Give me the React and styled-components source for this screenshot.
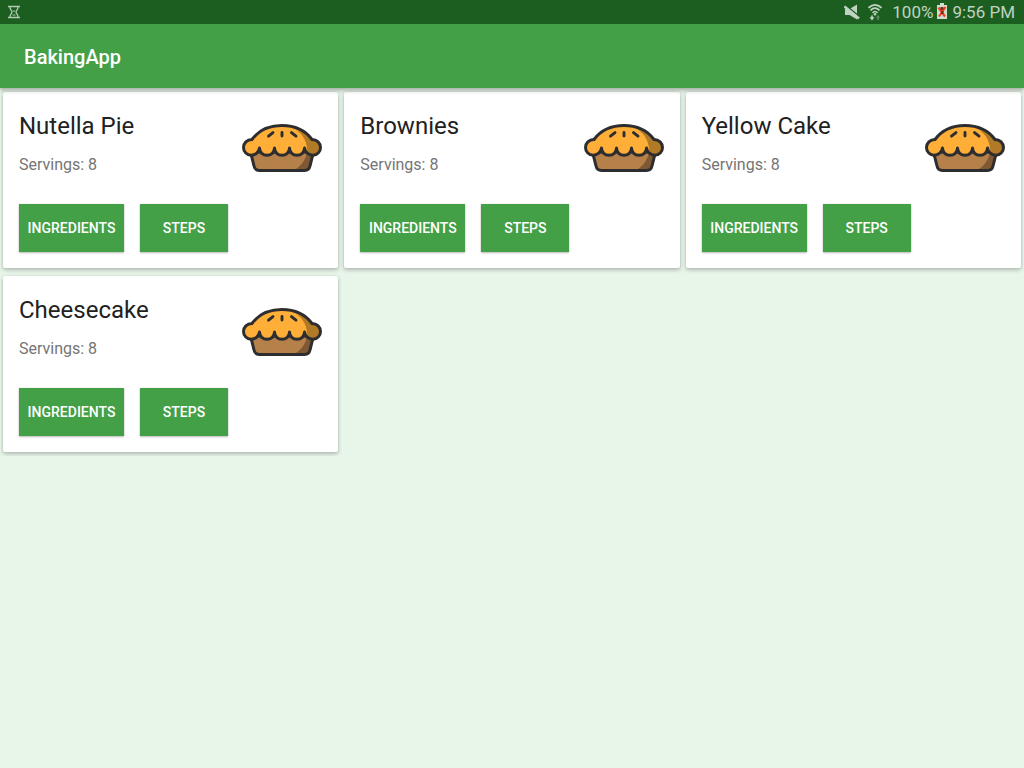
import React from "react";
import styled, { createGlobalStyle } from "styled-components";

const GlobalStyle = createGlobalStyle`
  *, *::before, *::after { box-sizing: border-box; }
  body {
    margin: 0;
    background: #e8f5e9;
    font-family: Roboto, "Noto Sans", sans-serif;
    color: #212121;
  }
`;

const StatusBar = styled.div`
  position: relative;
  z-index: 1;
  display: flex;
  align-items: center;
  justify-content: space-between;
  height: 24px;
  padding: 0 9px 0 8px;
  background: #1b5e20;
  color: #c0d2c1;
`;

const StatusGroup = styled.div`
  display: flex;
  align-items: center;
`;

const StatusText = styled.span`
  font-size: 17px;
  line-height: 24px;
`;

const StatusIcon = styled.svg`
  display: block;
  flex: none;
  margin-left: ${(p) => p.$before || 0}px;
  margin-right: ${(p) => p.$after || 0}px;
`;

const AppBar = styled.header`
  position: relative;
  display: flex;
  align-items: center;
  height: 64px;
  padding: 2px 24px 0;
  background: #43a047;
  box-shadow: 0 3px 4px rgba(0, 0, 0, 0.22), 0 0 4px rgba(0, 0, 0, 0.12);
`;

const AppTitle = styled.h1`
  margin: 0;
  font-size: 20px;
  font-weight: 500;
  line-height: 24px;
  color: #fff;
`;

const RecipeGrid = styled.main`
  display: grid;
  grid-template-columns: repeat(3, 1fr);
  gap: 8px 6px;
  padding: 4px 3px;
`;

const Card = styled.article`
  display: flex;
  flex-direction: column;
  gap: 16px;
  padding: 16px;
  background: #fff;
  border-radius: 2px;
  box-shadow: 0 2px 4px rgba(0, 0, 0, 0.24), 0 0 3px rgba(0, 0, 0, 0.08);
`;

const CardHeader = styled.div`
  display: flex;
  justify-content: space-between;
  height: 80px;
`;

const RecipeName = styled.h2`
  margin: 0 0 12px;
  font-size: 24px;
  font-weight: 400;
  line-height: 36px;
`;

const Servings = styled.p`
  margin: 0;
  font-size: 16px;
  line-height: 18px;
  color: #757575;
`;

const Pie = styled.svg`
  flex: none;
  align-self: center;
`;

const Actions = styled.div`
  display: grid;
  grid-template-columns: 105px 88px;
  gap: 16px;
`;

const ActionButton = styled.button`
  height: 48px;
  padding: 0;
  border: 0;
  background: #43a047;
  color: #fff;
  font-family: inherit;
  font-size: 14px;
  font-weight: 500;
  text-transform: uppercase;
  box-shadow: 0 1px 2px rgba(0, 0, 0, 0.26), 0 0 1px rgba(0, 0, 0, 0.12);
  cursor: pointer;
`;

const CRUST =
  "M10 15.5C17 6 28 1.5 40 1.5S63 6 70 15.5C75 15.5 78.5 19 78.5 23.5C78.5 28 75 31.2 71 31.2C66.5 31.2 63 28 62.5 24C62.5 28.5 59 31.2 55 31.2S47.5 28.5 47.5 24C47.5 28.5 44 31.2 40 31.2S32.5 28.5 32.5 24C32.5 28.5 29 31.2 25 31.2S17.5 28.5 17.5 24C17 28 13.5 31.2 9 31.2C5 31.2 1.5 28 1.5 23.5C1.5 19 5 15.5 10 15.5Z";
const BASE =
  "M8.5 28L12 42Q13 46.5 17.5 46.5H62.5Q67 46.5 68 42L71.5 28Z";

function PieIcon() {
  return (
    <Pie width="80" height="48" viewBox="0 0 80 48" aria-hidden="true">
      <path d={BASE} fill="#b5804a" />
      <path d="M65 28C64 36 58 43.5 51 46.5H62.5Q67 46.5 68 42L71.5 28Z" fill="#7e5934" />
      <path d={BASE} fill="none" stroke="#2d2d30" strokeWidth="3" strokeLinejoin="round" />
      <path d={CRUST} fill="#ffae37" />
      <path
        d="M50 3C59 8 65 15 65.5 28.5Q68 31.2 71 31.2C75 31.2 78.5 28 78.5 23.5C78.5 19 75 15.5 70 15.5C65 9 58.5 5 50 3Z"
        fill="#b17a27"
      />
      <path d={CRUST} fill="none" stroke="#2d2d30" strokeWidth="3" strokeLinejoin="round" />
      <path
        d="M26.5 12.2L31 8.6M40 8.5V12M49.5 8.6L54 12.2"
        fill="none"
        stroke="#2d2d30"
        strokeWidth="2.9"
        strokeLinecap="round"
      />
    </Pie>
  );
}

function HourglassIcon() {
  return (
    <StatusIcon width="12" height="14" viewBox="0 0 12 14" fill="none" stroke="#b4c9b5" aria-hidden="true">
      <path d="M0 1.5H12M0 12.5H12" strokeWidth="1.4" />
      <path d="M2 2C2 5 4 5.5 4 7S2 9 2 12M10 2C10 5 8 5.5 8 7S10 9 10 12" strokeWidth="1.3" />
      <path d="M5 6H7M4.5 10H7.5" strokeWidth="1" />
    </StatusIcon>
  );
}

function MuteIcon() {
  return (
    <StatusIcon $after={8} width="16" height="16" viewBox="0 0 16 16" fill="#c0d2c1" aria-hidden="true">
      <path d="M1 5H5.5L13 0.5V15.5L5.5 11H1Z" />
      <path d="M2 1.5L15.5 12.5" stroke="#1b5e20" strokeWidth="1.6" />
      <path d="M0.5 2.5L15 14.5" stroke="#c0d2c1" strokeWidth="2.4" />
    </StatusIcon>
  );
}

function WifiIcon() {
  return (
    <StatusIcon $after={10} width="14" height="18" viewBox="0 0 14 18" fill="none" stroke="#c0d2c1" aria-hidden="true">
      <path d="M0.5 4.8Q7 -1.2 13.5 4.8M2.5 7.4Q7 3 11.5 7.4M4.5 9.8Q7 7.2 9.5 9.8" strokeWidth="1.7" />
      <circle cx="7" cy="11.2" r="1.3" fill="#c0d2c1" stroke="none" />
      <path d="M4 12.5V15" strokeWidth="1.7" />
      <path d="M1.5 14.2H6.5L4 17.4Z" fill="#c0d2c1" stroke="none" />
      <path d="M10 17V14" stroke="#5c8a5f" strokeWidth="1.7" />
      <path d="M7.8 14.6H12.2L10 12Z" fill="#5c8a5f" stroke="none" />
    </StatusIcon>
  );
}

function BatteryIcon() {
  return (
    <StatusIcon $before={4} $after={5} width="10" height="18" viewBox="0 0 10 18" aria-hidden="true">
      <path d="M3 0H7V2H10V16H0V2H3Z" fill="#cfdcd0" />
      <path d="M1.5 4.5L8 13.5M8.5 4L2 13.5" stroke="#f0401f" strokeWidth="2.2" />
      <path d="M3.5 4H6.5V7H3.5ZM4 8H6.5V11H4Z" fill="#70301c" />
    </StatusIcon>
  );
}

const recipes = [
  { name: "Nutella Pie", servings: 8 },
  { name: "Brownies", servings: 8 },
  { name: "Yellow Cake", servings: 8 },
  { name: "Cheesecake", servings: 8 },
];

function RecipeCard({ name, servings }) {
  return (
    <Card>
      <CardHeader>
        <div>
          <RecipeName>{name}</RecipeName>
          <Servings>Servings: {servings}</Servings>
        </div>
        <PieIcon />
      </CardHeader>
      <Actions>
        <ActionButton type="button">Ingredients</ActionButton>
        <ActionButton type="button">Steps</ActionButton>
      </Actions>
    </Card>
  );
}

export default function App() {
  return (
    <>
      <GlobalStyle />
      <StatusBar>
        <HourglassIcon />
        <StatusGroup>
          <MuteIcon />
          <WifiIcon />
          <StatusText>100%</StatusText>
          <BatteryIcon />
          <StatusText>9:56 PM</StatusText>
        </StatusGroup>
      </StatusBar>
      <AppBar>
        <AppTitle>BakingApp</AppTitle>
      </AppBar>
      <RecipeGrid>
        {recipes.map((recipe) => (
          <RecipeCard key={recipe.name} {...recipe} />
        ))}
      </RecipeGrid>
    </>
  );
}
